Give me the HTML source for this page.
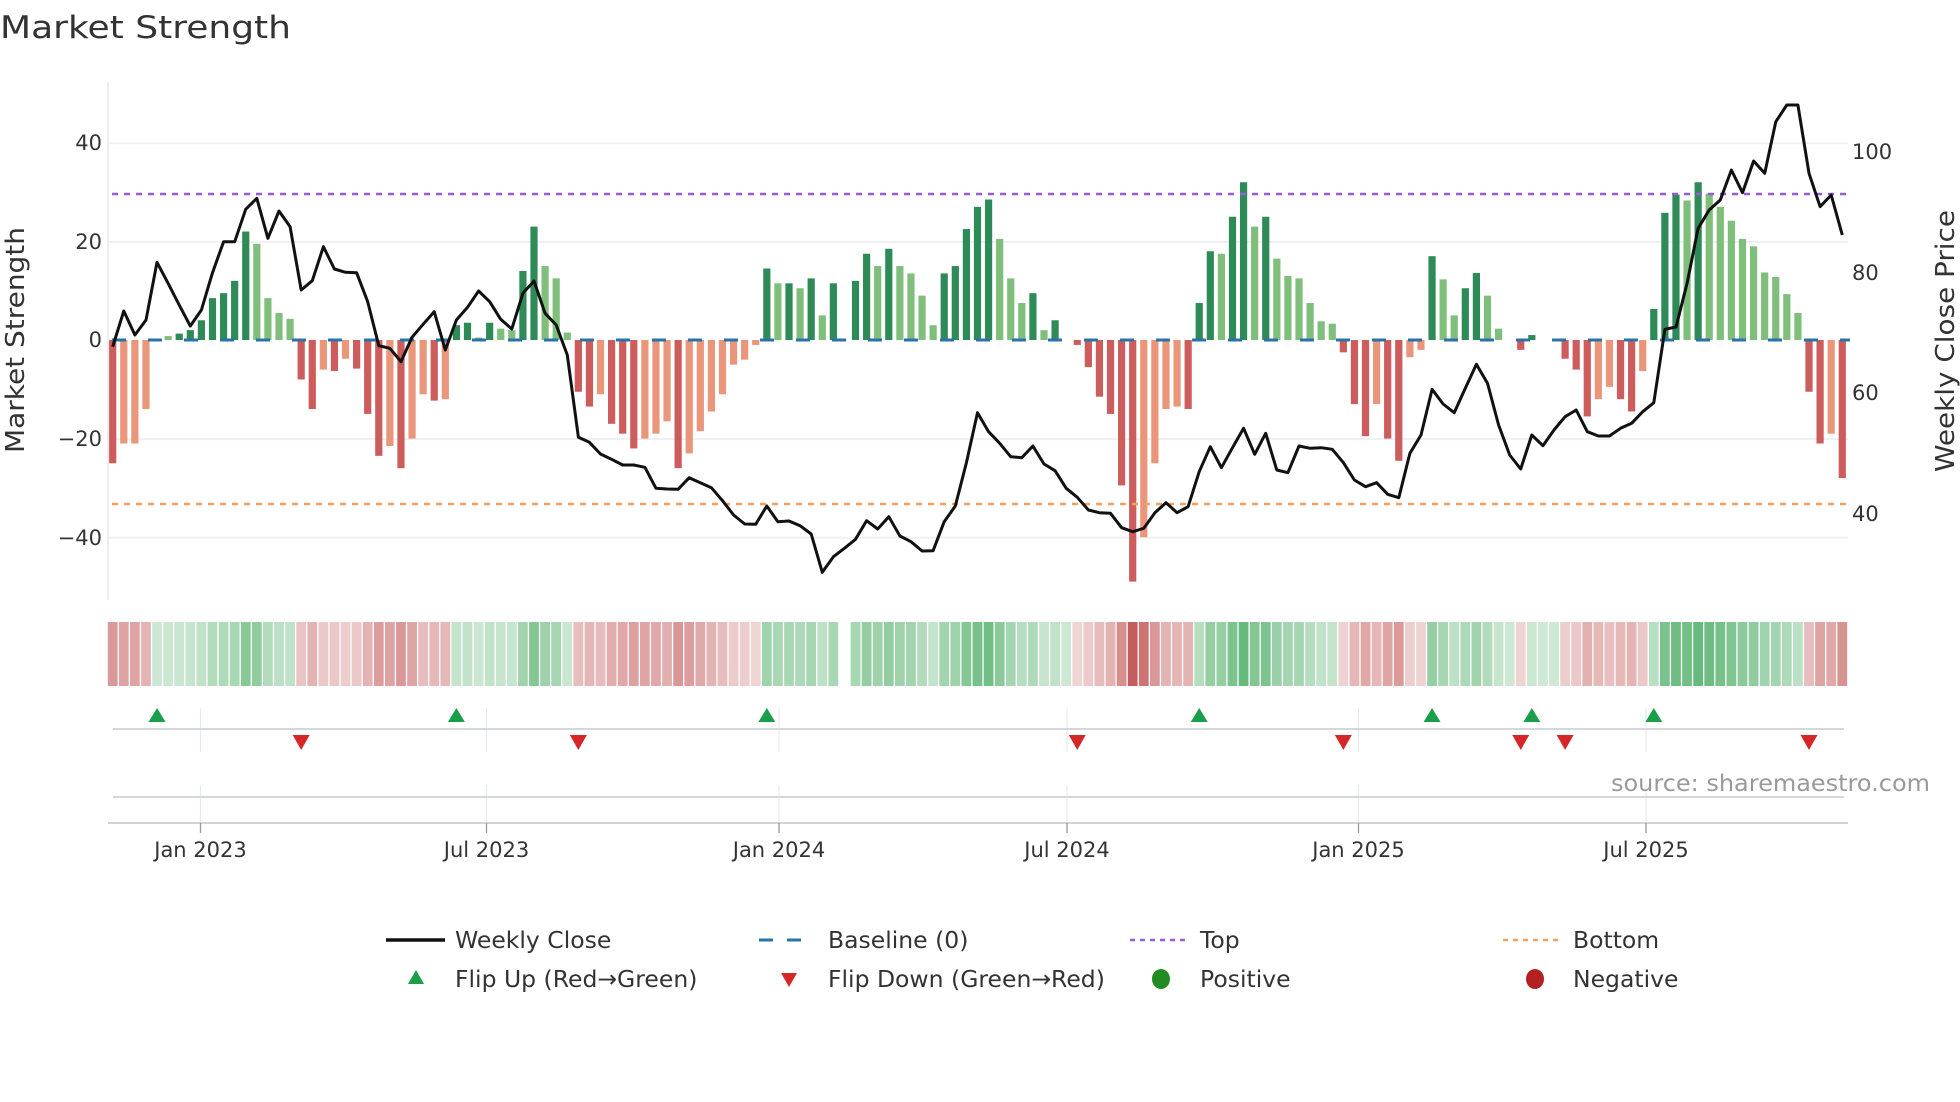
<!DOCTYPE html>
<html><head><meta charset="utf-8"><style>
html,body{margin:0;padding:0;background:#fff;}
svg{display:block;font-family:"DejaVu Sans","Liberation Sans",sans-serif;}
</style></head><body>
<svg id="s" width="1960" height="1102" viewBox="0 0 1960 1102" xmlns="http://www.w3.org/2000/svg">
<text x="0" y="38" font-size="31" fill="#333" textLength="291" lengthAdjust="spacingAndGlyphs">Market Strength</text>
<line x1="108" y1="82" x2="108" y2="600" stroke="#e8e8e8" stroke-width="1.5"/>
<g stroke="#eef0f4" stroke-width="2">
<line x1="108" y1="143.3" x2="1848" y2="143.3"/>
<line x1="108" y1="241.9" x2="1848" y2="241.9"/>
<line x1="108" y1="439.1" x2="1848" y2="439.1"/>
<line x1="108" y1="537.7" x2="1848" y2="537.7"/>
</g>
<g font-size="21" fill="#333" text-anchor="end">
<text x="102" y="150">40</text>
<text x="102" y="249">20</text>
<text x="102" y="347">0</text>
<text x="102" y="446">−20</text>
<text x="102" y="545">−40</text>
</g>
<g font-size="21" fill="#333">
<text x="1852" y="159">100</text>
<text x="1852" y="280">80</text>
<text x="1852" y="400">60</text>
<text x="1852" y="521">40</text>
</g>
<text transform="translate(24,340) rotate(-90)" font-size="26" fill="#333" text-anchor="middle" textLength="226" lengthAdjust="spacingAndGlyphs">Market Strength</text>
<text transform="translate(1954,341) rotate(-90)" font-size="26" fill="#333" text-anchor="middle" textLength="262" lengthAdjust="spacingAndGlyphs">Weekly Close Price</text>
<g id="bars"></g>
<line x1="112" y1="340" x2="1850" y2="340" stroke="#2a73a8" stroke-width="3" stroke-dasharray="14 22"/>
<line x1="112" y1="194" x2="1850" y2="194" stroke="#9b5bd8" stroke-width="2.5" stroke-dasharray="6 6"/>
<line x1="112" y1="504" x2="1850" y2="504" stroke="#f2a15e" stroke-width="2.5" stroke-dasharray="6 6"/>
<polyline id="price" fill="none" stroke="#111" stroke-width="3" stroke-linejoin="round"/>
<g id="heat"></g>
<g stroke="#e6eaee" stroke-width="1.2">
<line x1="200.5" y1="708" x2="200.5" y2="752"/><line x1="486.5" y1="708" x2="486.5" y2="752"/><line x1="779" y1="708" x2="779" y2="752"/><line x1="1067" y1="708" x2="1067" y2="752"/><line x1="1358.5" y1="708" x2="1358.5" y2="752"/><line x1="1646" y1="708" x2="1646" y2="752"/>
<line x1="200.5" y1="785" x2="200.5" y2="822"/><line x1="486.5" y1="785" x2="486.5" y2="822"/><line x1="779" y1="785" x2="779" y2="822"/><line x1="1067" y1="785" x2="1067" y2="822"/><line x1="1358.5" y1="785" x2="1358.5" y2="822"/><line x1="1646" y1="785" x2="1646" y2="822"/>
</g>
<line x1="113" y1="729" x2="1844" y2="729" stroke="#d4d8dc" stroke-width="2"/>
<line x1="113" y1="797" x2="1844" y2="797" stroke="#d4d8dc" stroke-width="2"/>
<line x1="108" y1="823" x2="1848" y2="823" stroke="#d0d4d8" stroke-width="2"/>
<g stroke="#999" stroke-width="1.3">
<line x1="200.5" y1="823" x2="200.5" y2="833"/><line x1="486.5" y1="823" x2="486.5" y2="833"/><line x1="779" y1="823" x2="779" y2="833"/><line x1="1067" y1="823" x2="1067" y2="833"/><line x1="1358.5" y1="823" x2="1358.5" y2="833"/><line x1="1646" y1="823" x2="1646" y2="833"/>
</g>
<g id="marks"></g>
<text x="1930" y="791" font-size="23" fill="#9a9a9a" text-anchor="end" textLength="319" lengthAdjust="spacingAndGlyphs">source: sharemaestro.com</text>
<g font-size="21" fill="#333" text-anchor="middle">
<text x="200.5" y="857">Jan 2023</text><text x="486.5" y="857">Jul 2023</text><text x="779" y="857">Jan 2024</text><text x="1067" y="857">Jul 2024</text><text x="1358.5" y="857">Jan 2025</text><text x="1646" y="857">Jul 2025</text>
</g>
<g font-size="23.5" fill="#333">
<line x1="386" y1="940" x2="445" y2="940" stroke="#111" stroke-width="3.5"/>
<text x="455" y="948">Weekly Close</text>
<line x1="759" y1="940" x2="815" y2="940" stroke="#2a73a8" stroke-width="3" stroke-dasharray="14 14"/>
<text x="828" y="948">Baseline (0)</text>
<line x1="1130" y1="940" x2="1185" y2="940" stroke="#9b5bd8" stroke-width="2.5" stroke-dasharray="5 5"/>
<text x="1200" y="948">Top</text>
<line x1="1503" y1="940" x2="1559" y2="940" stroke="#f2a15e" stroke-width="2.5" stroke-dasharray="5 5"/>
<text x="1573" y="948">Bottom</text>
<polygon points="416,970 424,984 408,984" fill="#1a9e4a"/>
<text x="455" y="987">Flip Up (Red→Green)</text>
<polygon points="781,973 797,973 789,987" fill="#d62728"/>
<text x="828" y="987">Flip Down (Green→Red)</text>
<ellipse cx="1161" cy="979" rx="9" ry="10" fill="#228b22"/>
<text x="1200" y="987">Positive</text>
<ellipse cx="1535" cy="979" rx="9" ry="10" fill="#b22222"/>
<text x="1573" y="987">Negative</text>
</g>
</svg>
<script>
(function(){
var NS="http://www.w3.org/2000/svg";
var V=[[-25,'R'],[-21,'r'],[-21,'r'],[-14,'r'],[0.3,'g'],[.8,'g'],[1.3,'G'],[2,'G'],[4,'G'],[8.5,'G'],[9.5,'G'],[12,'G'],[22,'G'],[19.5,'g'],[8.5,'g'],[5.5,'g'],[4.3,'g'],
[-8,'R'],[-14,'R'],[-6,'r'],[-6.3,'R'],[-3.8,'r'],[-5.8,'R'],[-15,'R'],[-23.5,'R'],[-21.5,'r'],[-26,'R'],[-20,'r'],[-11,'r'],[-12.3,'R'],[-12,'r'],
[3,'G'],[3.5,'G'],[.5,'g'],[3.5,'G'],[2.3,'g'],[2,'g'],[14,'G'],[23,'G'],[15,'g'],[12.5,'g'],[1.5,'g'],
[-10.5,'R'],[-13.5,'R'],[-11,'r'],[-17,'R'],[-19,'R'],[-22,'R'],[-20,'r'],[-19,'r'],[-16.5,'r'],[-26,'R'],[-23,'r'],[-18.5,'r'],[-14.5,'r'],[-11,'r'],[-5,'r'],[-4,'r'],[-1,'r'],
[14.5,'G'],[11.5,'g'],[11.5,'G'],[10.5,'g'],[12.5,'G'],[5,'g'],[11.5,'G'],null,
[12,'G'],[17.5,'G'],[15,'g'],[18.5,'G'],[15,'g'],[13.5,'g'],[9,'g'],[3,'g'],[13.5,'G'],[15,'G'],[22.5,'G'],[27,'G'],[28.5,'G'],
[20.5,'g'],[12.5,'g'],[7.5,'g'],[9.5,'G'],[2,'g'],[4,'G'],[0,'g'],
[-1,'R'],[-5.5,'R'],[-11.5,'R'],[-15,'R'],[-29.5,'R'],[-49,'R'],[-40,'r'],[-25,'r'],[-14,'r'],[-13.5,'r'],[-14,'R'],
[7.5,'G'],[18,'G'],[17.5,'g'],[25,'G'],[32,'G'],[23,'g'],[25,'G'],[16.5,'g'],[13,'g'],[12.5,'g'],[7.5,'g'],[3.8,'g'],[3.3,'g'],
[-2.5,'R'],[-13,'R'],[-19.5,'R'],[-13,'r'],[-20,'R'],[-24.5,'R'],[-3.5,'r'],[-2,'r'],
[17,'G'],[12.3,'g'],[5,'g'],[10.5,'G'],[13.6,'G'],[9,'g'],[2.3,'g'],[0,'g'],[-2,'R'],[1,'G'],[0,'g'],[0,'g'],
[-3.8,'R'],[-6,'R'],[-15.5,'R'],[-12,'r'],[-9.5,'r'],[-12,'R'],[-14.5,'R'],[-6.3,'r'],
[6.3,'G'],[25.8,'G'],[29.5,'G'],[28.3,'g'],[32,'G'],[29.7,'g'],[27,'g'],[24.2,'g'],[20.5,'g'],[19,'g'],[13.7,'g'],[12.8,'g'],[9.3,'g'],[5.5,'g'],
[-10.5,'R'],[-21,'R'],[-19,'r'],[-28,'R']];
var P=[800,693,765,720,547,610,675,738,690,578,485,485,388,355,475,393,440,630,602,500,567,577,578,665,797,805,845,772,733,695,810,720,682,633,665,718,747,640,603,700,
735,825,1072,1087,1122,1138,1155,1155,1162,1225,1227,1228,1193,1208,1223,1262,1305,1332,1333,1278,1325,1323,1337,1362,1477,1430,1405,1378,1322,1347,1310,1368,1385,1413,1412,1325,1278,1148,998,1055,
1090,1130,1133,1098,1152,1172,1225,1252,1290,1298,1300,1343,1355,1345,1298,1268,1298,1280,1175,1100,1163,1103,1045,1123,1060,1170,1178,1098,1105,1103,1108,1148,1200,1220,1208,1243,1253,1120,1065,
928,972,998,925,853,910,1035,1125,1167,1065,1097,1050,1010,990,1055,1068,1068,1045,1030,995,968,748,741,610,445,390,360,270,338,243,280,125,75,75,280,380,345,465];
var C={G:'#2e8b57',g:'#7fbf7b',R:'#cd5c5c',r:'#e9967a'};
var X0=112.7,DX=11.087,Z=340,U=4.93;
var bars=document.getElementById('bars'),heat=document.getElementById('heat');
function el(t,a,p){var e=document.createElementNS(NS,t);for(var k in a)e.setAttribute(k,a[k]);p.appendChild(e);return e;}
for(var i=0;i<V.length;i++){
 var x=X0+DX*i,d=V[i];
 if(!d)continue;
 var v=d[0],h=Math.abs(v)*U;
 if(h>0.3) el('rect',{x:x-3.6,y:v>0?Z-h:Z,width:7.2,height:h,fill:C[d[1]]},bars);
 var fill,op;
 if(v>=0){fill='rgb(70,170,95)';op=0.27+0.55*Math.min(v/32,1);}
 else{fill='rgb(190,75,75)';op=0.22+0.68*Math.min(-v/49,1);}
 el('rect',{x:x-4.9,y:622,width:9.8,height:64,fill:fill,'fill-opacity':op.toFixed(3)},heat);
}
var pts=[];
for(var i=0;i<P.length;i++){pts.push((X0+DX*i).toFixed(1)+','+(80+P[i]/3).toFixed(1));}
document.getElementById('price').setAttribute('points',pts.join(' '));
var marks=document.getElementById('marks');
[4,31,59,98,119,128,139].forEach(function(i){var x=X0+DX*i;el('polygon',{points:(x)+',708 '+(x+8.5)+',722 '+(x-8.5)+',722',fill:'#1a9e4a'},marks);});
[17,42,87,111,127,131,153].forEach(function(i){var x=X0+DX*i;el('polygon',{points:(x-8.5)+',735 '+(x+8.5)+',735 '+x+',750',fill:'#d62728'},marks);});
})();
</script>
</body></html>
